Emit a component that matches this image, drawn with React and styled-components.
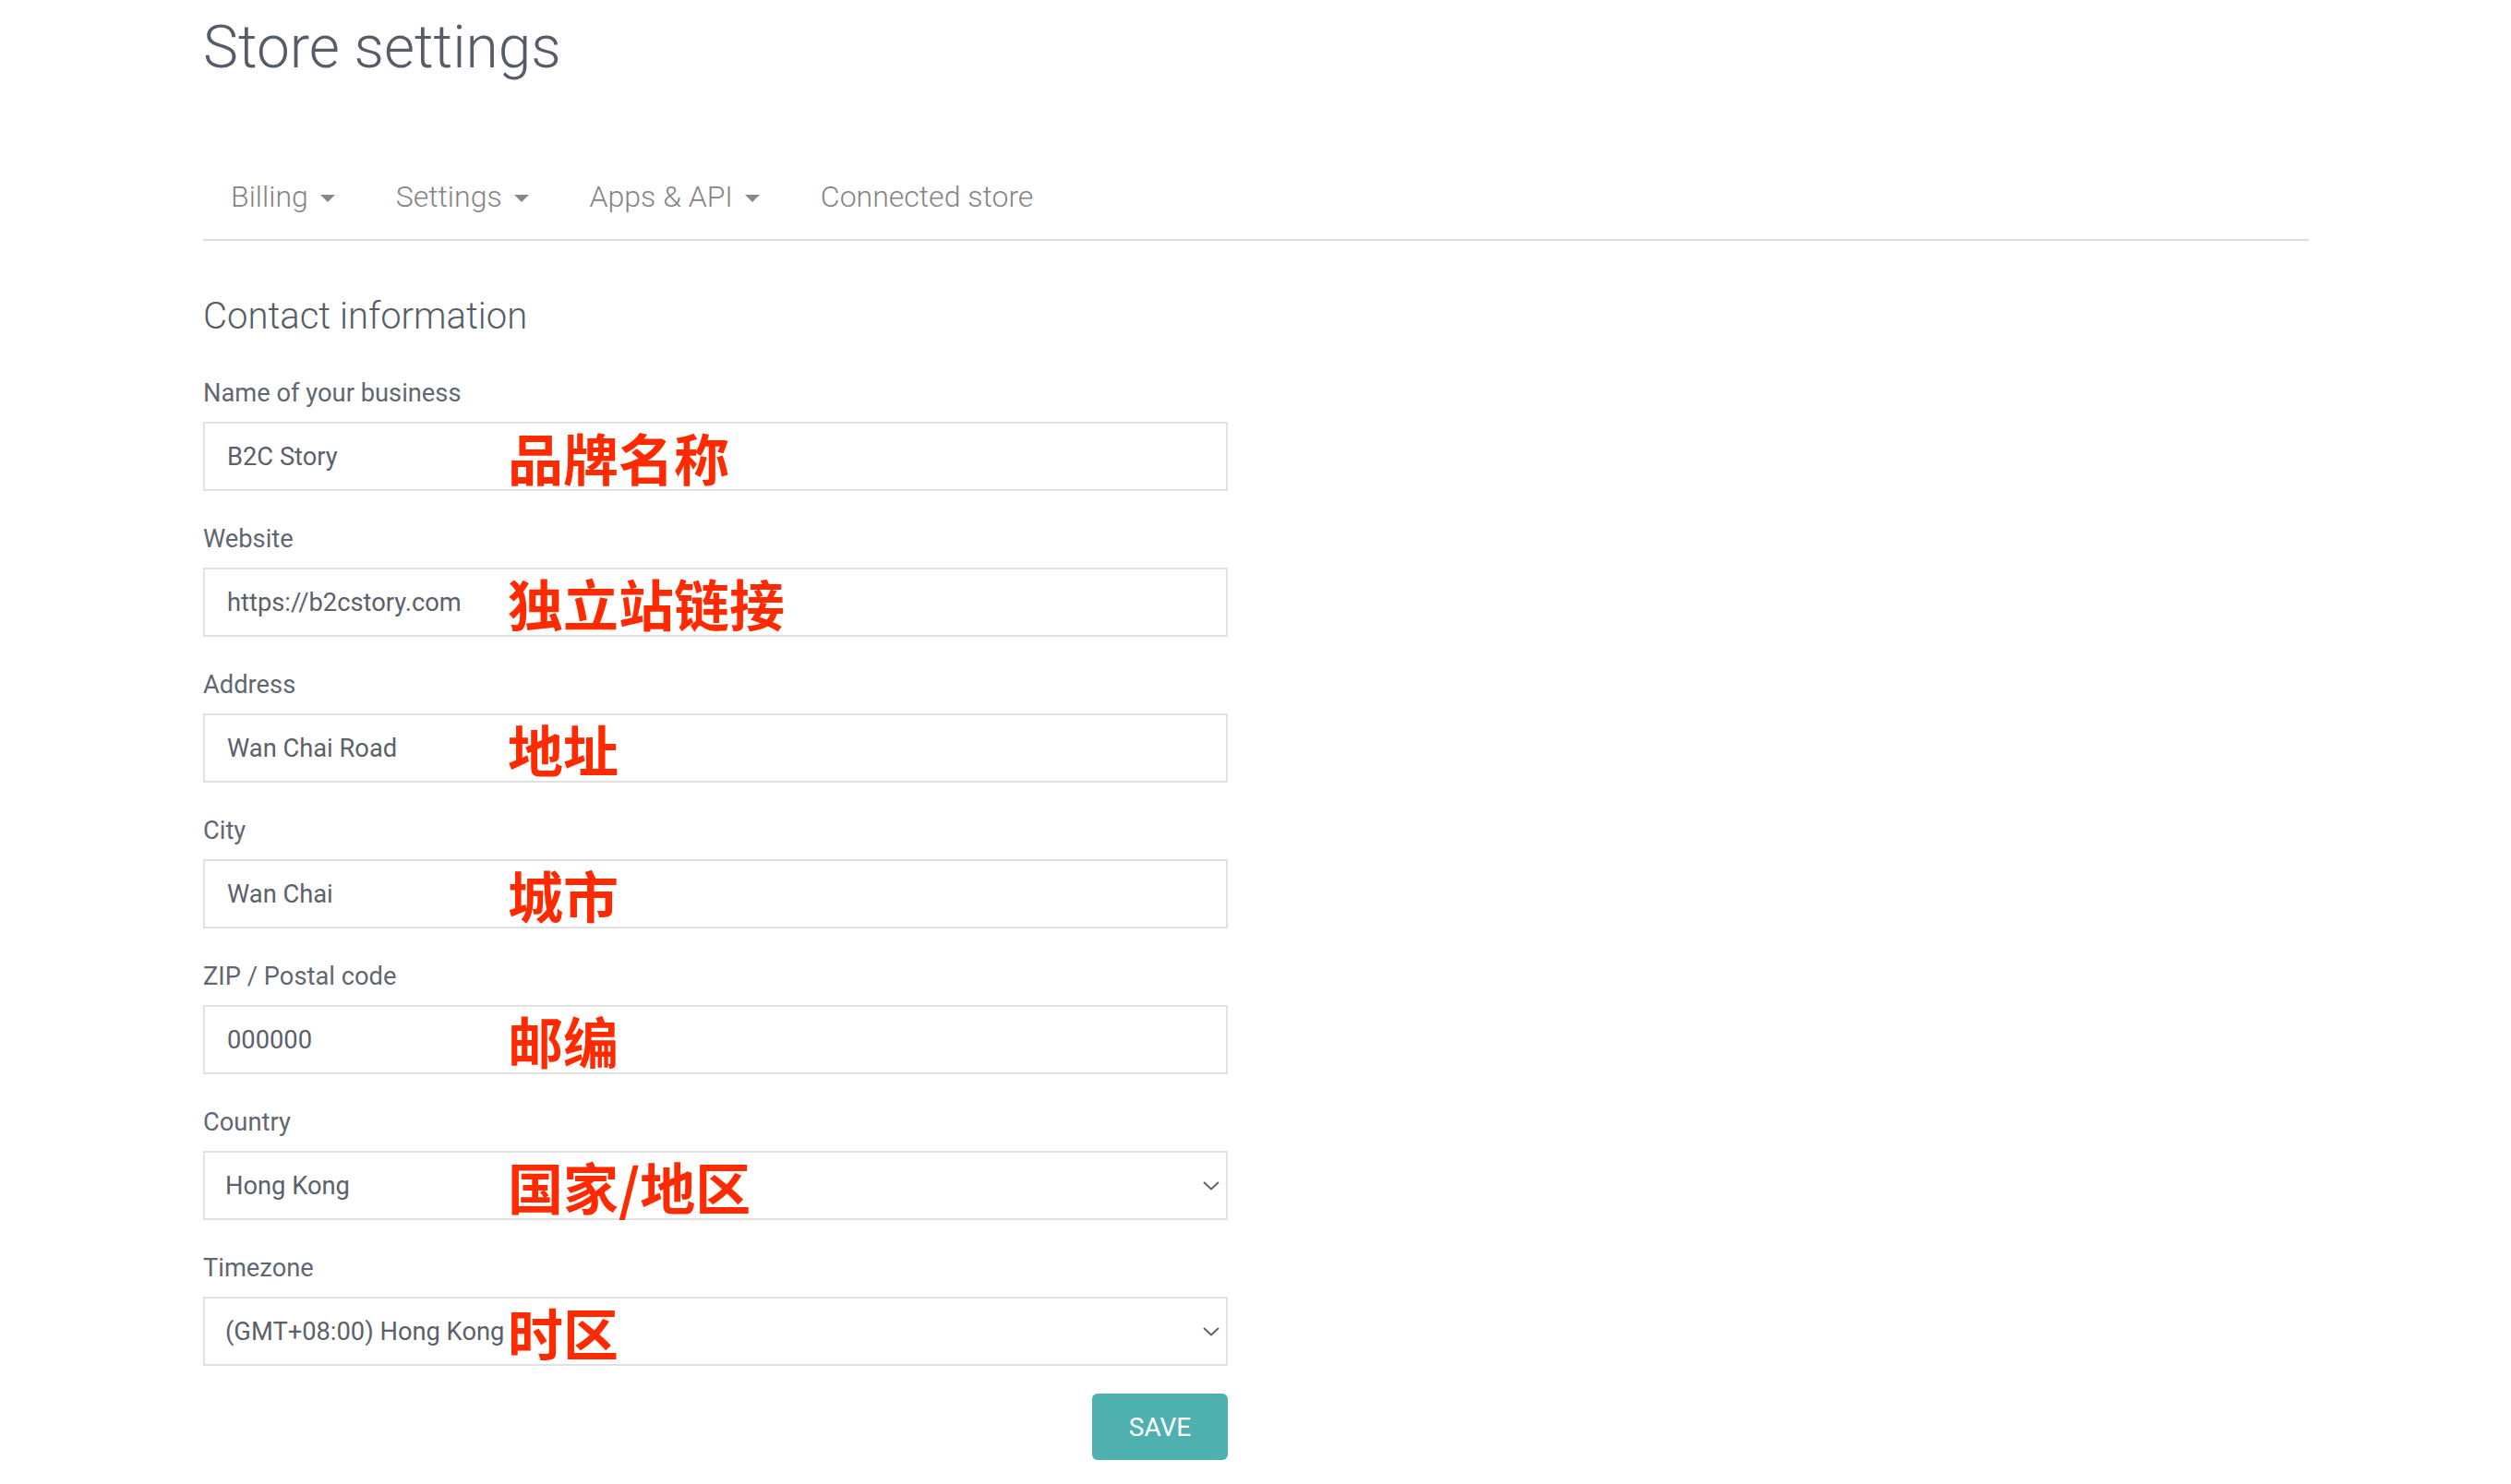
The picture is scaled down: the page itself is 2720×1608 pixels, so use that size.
import React from 'react';
import styled, { createGlobalStyle } from 'styled-components';

const GlobalStyle = createGlobalStyle`
    body {
        margin: 0;
        background: #ffffff;
        font-family: Roboto, "Liberation Sans", sans-serif;
    }
`;

const PageDiv = styled.div`
    padding: 12px 0 40px 220px;
    width: 2281px;
`;

const TitleH1 = styled.h1`
    margin: 0;
    font-size: 64px;
    line-height: 80px;
    font-weight: 300;
    color: #545d68;
`;

const NavBar = styled.nav`
    margin-top: 101px;
    display: flex;
    border-bottom: 2px solid #dddddd;
    padding-bottom: 26px;
`;

const NavItem = styled.div`
    display: flex;
    align-items: center;
    padding: 0 33px;
    font-size: 32px;
    line-height: 40px;
    font-weight: 300;
    color: #858585;
    &:first-child {
        padding-left: 30px;
    }
`;

const Caret = styled.span`
    margin-left: 13px;
    margin-top: 4px;
    width: 0;
    height: 0;
    border-left: 8px solid transparent;
    border-right: 8px solid transparent;
    border-top: 8px solid #888888;
`;

const SectionH2 = styled.h2`
    margin: 58px 0 0;
    font-size: 40px;
    line-height: 48px;
    font-weight: 300;
    color: #545d68;
`;

const Form = styled.form`
    margin-top: 7px;
    width: 1110px;
    display: flex;
    flex-direction: column;
`;

const FieldGroup = styled.div`
    margin-top: 34px;
`;

const Label = styled.label`
    display: block;
    font-size: 27.3px;
    line-height: 36px;
    font-weight: 400;
    color: #5f6872;
    margin-bottom: 13px;
`;

const FieldBox = styled.div`
    position: relative;
    height: 75px;
    box-sizing: border-box;
    border: 2px solid #e1e1e1;
    display: flex;
    align-items: center;
    padding: 0 7px 0 ${(p) => (p.$select ? '22px' : '24px')};
    cursor: ${(p) => (p.$select ? 'pointer' : 'text')};
`;

const TextInput = styled.input`
    flex: 1;
    border: none;
    outline: none;
    background: transparent;
    padding: 0;
    font-family: Roboto, "Liberation Sans", sans-serif;
    font-size: 27.3px;
    font-weight: 400;
    color: #5a616b;
`;

const SelectValue = styled.span`
    flex: 1;
    font-size: 27.3px;
    font-weight: 400;
    color: #5a616b;
    white-space: nowrap;
`;

const Chevron = styled.svg`
    width: 18px;
    height: 10px;
    flex-shrink: 0;
`;

const Note = styled.span`
    position: absolute;
    left: 328px;
    top: 0;
    bottom: 0;
    display: flex;
    align-items: center;
    font-family: "Noto Sans CJK SC", "Noto Sans", sans-serif;
    font-size: 60px;
    font-weight: 700;
    color: #ff2a00;
    pointer-events: none;
`;

const ButtonRow = styled.div`
    display: flex;
    justify-content: flex-end;
    margin-top: 30px;
`;

const SaveButton = styled.button`
    width: 147px;
    height: 72px;
    border: none;
    border-radius: 6px;
    background: #4fb0b0;
    color: #ffffff;
    font-family: Roboto, "Liberation Sans", sans-serif;
    font-size: 28px;
    font-weight: 400;
    text-transform: uppercase;
`;

const fields = [
    { label: 'Name of your business', value: 'B2C Story', note: '品牌名称' },
    { label: 'Website', value: 'https://b2cstory.com', note: '独立站链接' },
    { label: 'Address', value: 'Wan Chai Road', note: '地址' },
    { label: 'City', value: 'Wan Chai', note: '城市' },
    { label: 'ZIP / Postal code', value: '000000', note: '邮编' },
    { label: 'Country', value: 'Hong Kong', note: '国家/地区', select: true },
    { label: 'Timezone', value: '(GMT+08:00) Hong Kong', note: '时区', select: true },
];

const ChevronIcon = () => (
    <Chevron viewBox="0 0 18 10">
        <path d="M1 1 L9 8.5 L17 1" fill="none" stroke="#5a6470" strokeWidth="2" />
    </Chevron>
);

const App = () => {
    return (
        <PageDiv>
            <GlobalStyle />
            <TitleH1>Store settings</TitleH1>

            <NavBar>
                <NavItem>Billing<Caret /></NavItem>
                <NavItem>Settings<Caret /></NavItem>
                <NavItem>Apps &amp; API<Caret /></NavItem>
                <NavItem>Connected store</NavItem>
            </NavBar>

            <SectionH2>Contact information</SectionH2>

            <Form onSubmit={(e) => e.preventDefault()}>
                {fields.map((f) => (
                    <FieldGroup key={f.label}>
                        <Label>{f.label}</Label>
                        <FieldBox $select={f.select}>
                            {f.select ? (
                                <>
                                    <SelectValue>{f.value}</SelectValue>
                                    <ChevronIcon />
                                </>
                            ) : (
                                <TextInput defaultValue={f.value} />
                            )}
                            <Note>{f.note}</Note>
                        </FieldBox>
                    </FieldGroup>
                ))}
                <ButtonRow>
                    <SaveButton type="submit">Save</SaveButton>
                </ButtonRow>
            </Form>
        </PageDiv>
    );
};

export default App;
